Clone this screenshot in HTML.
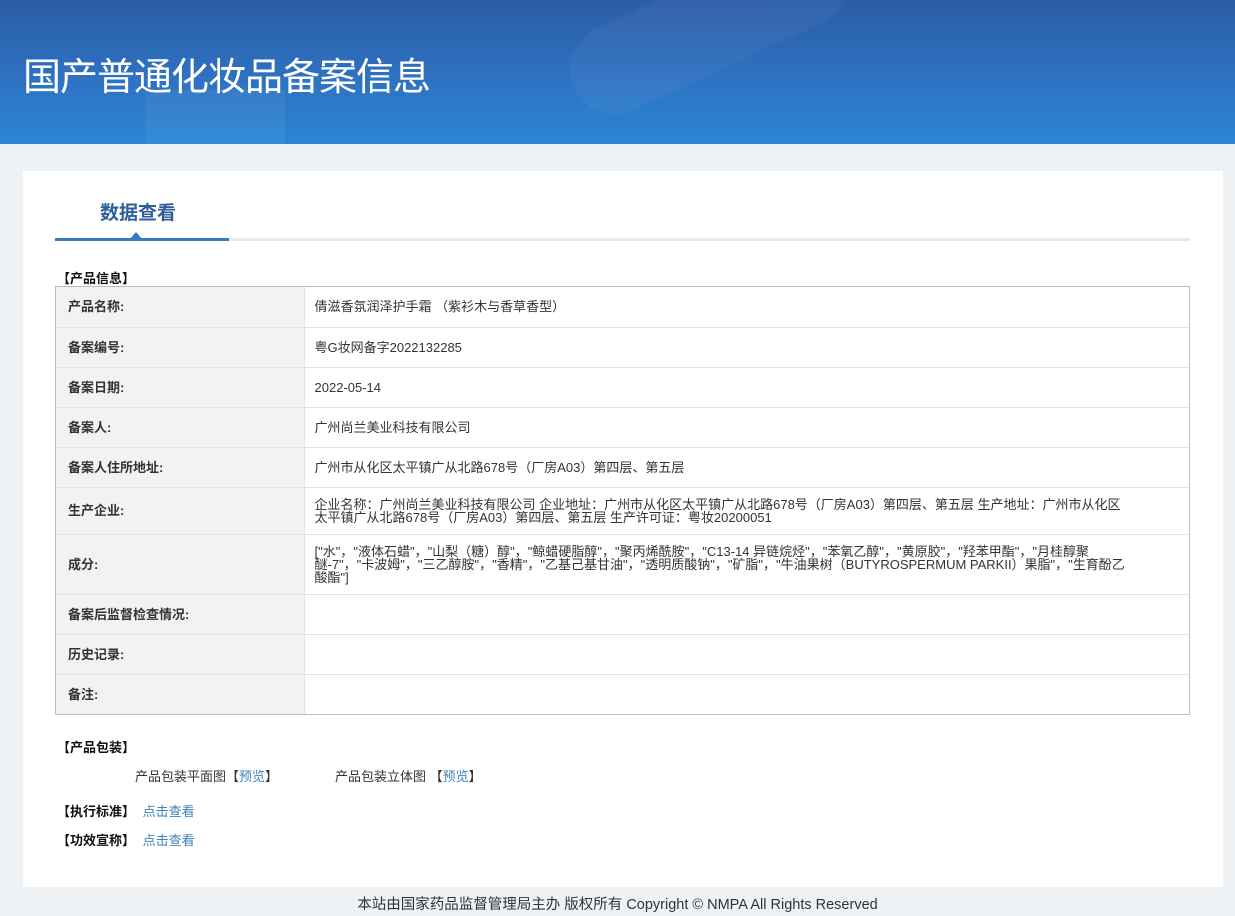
<!DOCTYPE html>
<html><head><meta charset="utf-8"><style>
*{margin:0;padding:0;box-sizing:border-box}
body{width:1235px;height:916px;background:#eef2f5;font-family:"Liberation Sans","Noto Sans CJK SC",sans-serif;font-size:13px;color:#333;position:relative;overflow:hidden}
.ban{position:absolute;left:0;top:0;width:1235px;height:144px;background:linear-gradient(180deg,#2b5ca6 0%,#2e74c4 60%,#2a86d4 100%);overflow:hidden}
.ban h1{position:absolute;left:23px;top:46px;font-size:38px;font-weight:normal;color:#fff;letter-spacing:-1px;font-family:"Noto Sans CJK SC",sans-serif}
.card{position:absolute;left:23px;top:171px;width:1200px;height:716px;background:#fff}
.tab{position:absolute;left:100px;top:198px;font-size:19px;font-weight:bold;color:#2d5e99}
.line{position:absolute;left:55px;top:238px;width:1135px;height:3px;background:#e6e8ea}
.line2{position:absolute;left:55px;top:238px;width:174px;height:3px;background:#3a7ab8}
.tri{position:absolute;left:130px;top:232px;width:0;height:0;border-left:6px solid transparent;border-right:6px solid transparent;border-bottom:7px solid #2e78c0}
.sec{position:absolute;font-weight:bold;color:#111;font-size:13px}
.tw{position:absolute;left:55px;top:286px;width:1135px;border:1px solid #a9c1d9}
table{width:100%;border-collapse:collapse}
td{border:1px solid #e3e3e3;height:40px;vertical-align:middle;line-height:13px}
tr:first-child td{border-top:none}tr:last-child td{border-bottom:none}
td:first-child{border-left:none}td:last-child{border-right:none}
td.l{width:248px;background:#f2f2f2;font-weight:bold;padding-left:12px;color:#333}
td.v{padding-left:10px;padding-right:56px;color:#333}
.a{color:#3f82b8}
.ft{position:absolute;top:893px;left:0;width:1235px;text-align:center;font-size:14.5px;color:#333}
</style></head><body>
<div class="ban">
<div style="position:absolute;left:560px;top:-20px;width:300px;height:90px;border-radius:45px;background:rgba(255,255,255,.04);transform:rotate(-25deg)"></div>
<div style="position:absolute;left:145px;top:90px;width:140px;height:60px;background:rgba(255,255,255,.05)"></div>
<h1>国产普通化妆品备案信息</h1></div>
<div class="card"></div>
<div class="tab">数据查看</div>
<div class="line"></div><div class="line2"></div><div class="tri"></div>
<div class="sec" style="left:57px;top:268px">【产品信息】</div>
<div class="tw"><table>
<tr><td class="l">产品名称:</td><td class="v">倩滋香氛润泽护手霜 （紫衫木与香草香型）</td></tr>
<tr><td class="l">备案编号:</td><td class="v">粤G妆网备字2022132285</td></tr>
<tr><td class="l">备案日期:</td><td class="v">2022-05-14</td></tr>
<tr><td class="l">备案人:</td><td class="v">广州尚兰美业科技有限公司</td></tr>
<tr><td class="l">备案人住所地址:</td><td class="v">广州市从化区太平镇广从北路678号（厂房A03）第四层、第五层</td></tr>
<tr><td class="l" style="height:47px">生产企业:</td><td class="v">企业名称：广州尚兰美业科技有限公司 企业地址：广州市从化区太平镇广从北路678号（厂房A03）第四层、第五层 生产地址：广州市从化区太平镇广从北路678号（厂房A03）第四层、第五层 生产许可证：粤妆20200051</td></tr>
<tr><td class="l" style="height:60px">成分:</td><td class="v">["水"，"液体石蜡"，"山梨（糖）醇"，"鲸蜡硬脂醇"，"聚丙烯酰胺"，"C13-14 异链烷烃"，"苯氧乙醇"，"黄原胶"，"羟苯甲酯"，"月桂醇聚醚-7"，"卡波姆"，"三乙醇胺"，"香精"，"乙基己基甘油"，"透明质酸钠"，"矿脂"，"牛油果树（BUTYROSPERMUM PARKII）果脂"，"生育酚乙酸酯"]</td></tr>
<tr><td class="l">备案后监督检查情况:</td><td class="v"></td></tr>
<tr><td class="l">历史记录:</td><td class="v"></td></tr>
<tr><td class="l">备注:</td><td class="v"></td></tr>
</table></div>
<div class="sec" style="left:57px;top:737px">【产品包装】</div>
<div style="position:absolute;left:135px;top:766px">产品包装平面图【<span class="a">预览</span>】</div>
<div style="position:absolute;left:335px;top:766px">产品包装立体图 【<span class="a">预览</span>】</div>
<div class="sec" style="left:57px;top:801px">【执行标准】 <span class="a" style="font-weight:normal;margin-left:4px">点击查看</span></div>
<div class="sec" style="left:57px;top:830px">【功效宣称】 <span class="a" style="font-weight:normal;margin-left:4px">点击查看</span></div>
<div class="ft">本站由国家药品监督管理局主办 版权所有 Copyright © NMPA All Rights Reserved</div>
</body></html>
